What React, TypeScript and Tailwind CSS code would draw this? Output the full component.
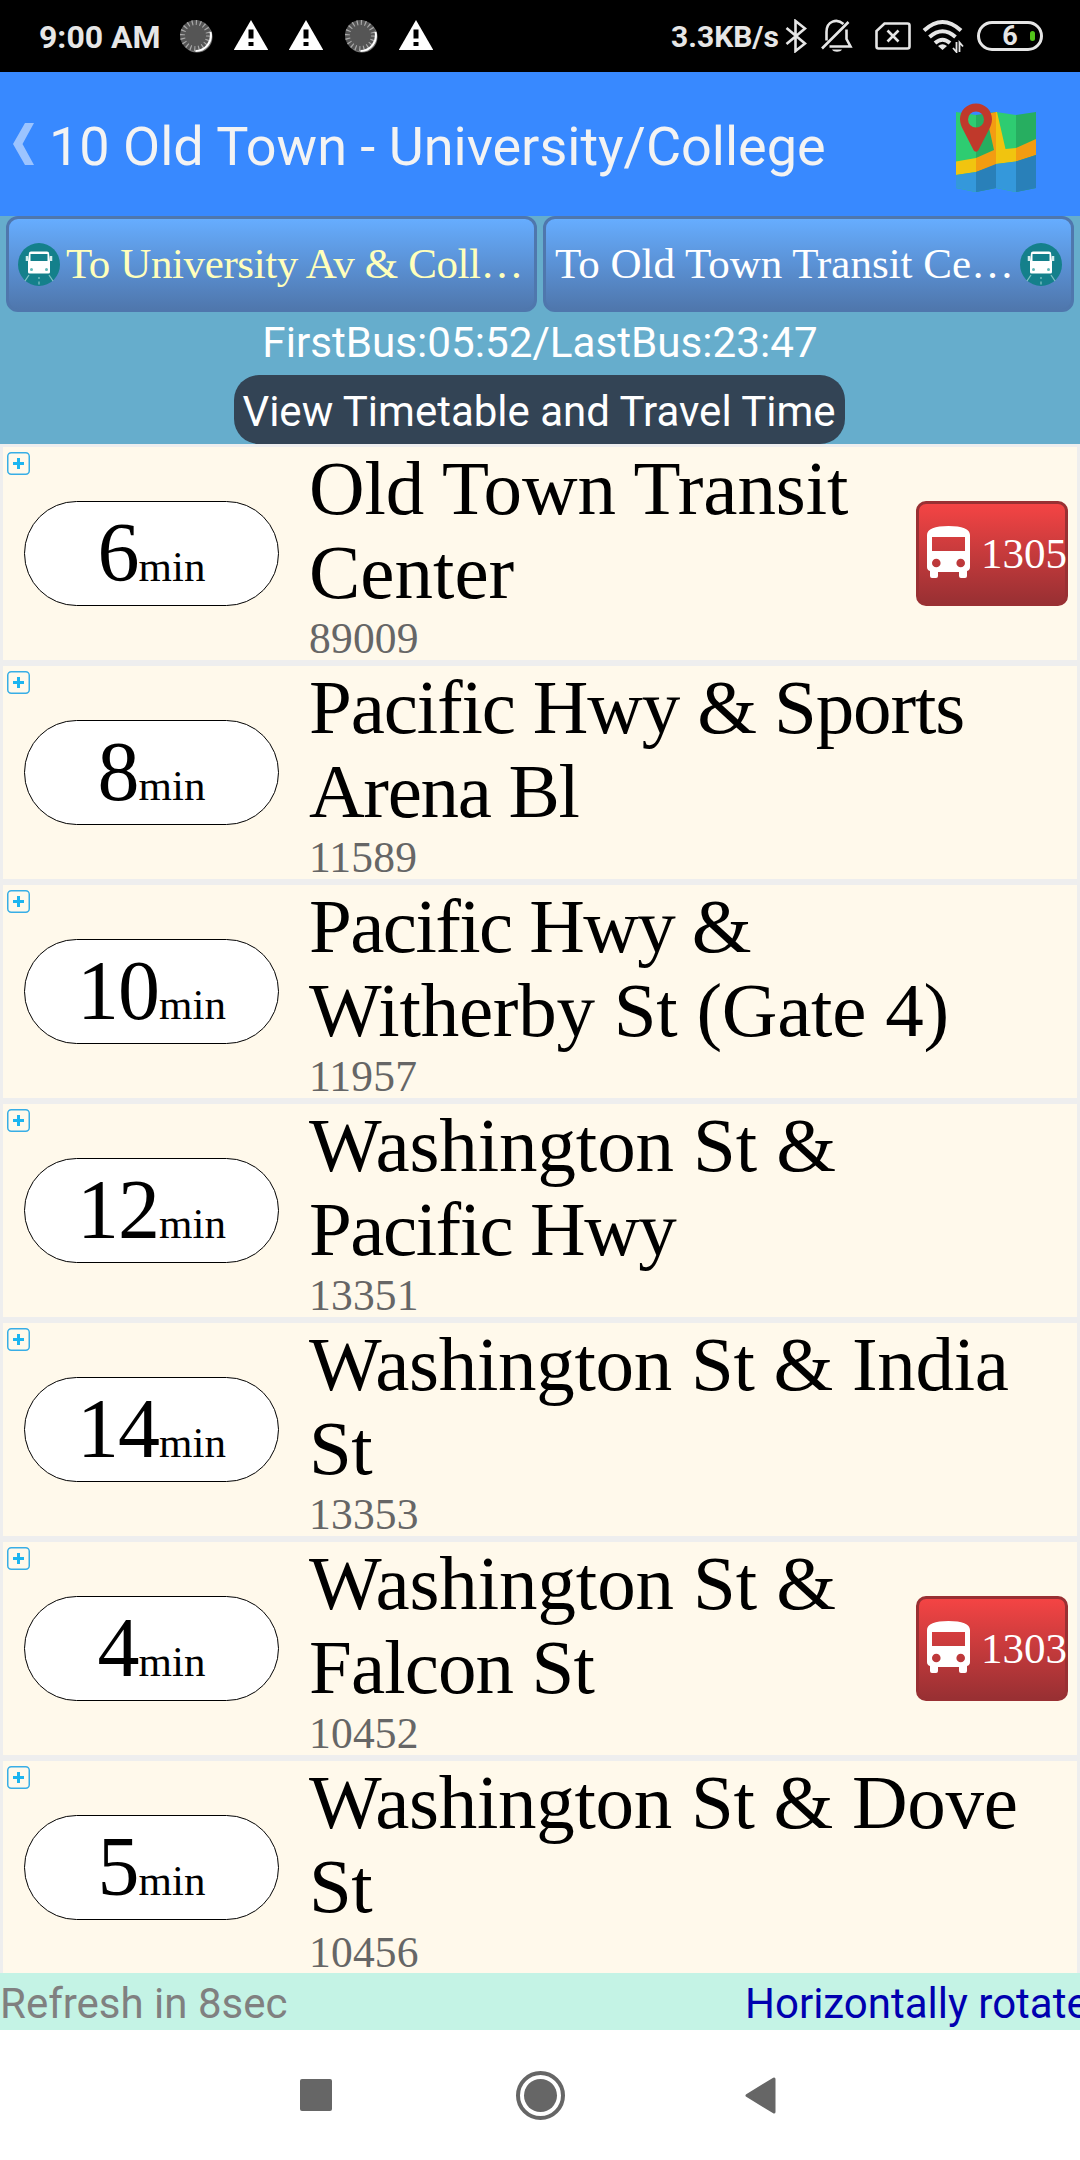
import type { ReactNode } from "react";

type Stop = {
  minutes: string;
  lines: [string, string];
  tracking: [string, string];
  code: string;
  vehicle?: string;
};

const STOPS: Stop[] = [
  { minutes: "6", lines: ["Old Town Transit", "Center"], tracking: ["tracking-[-0.1px]", "tracking-normal"], code: "89009", vehicle: "1305" },
  { minutes: "8", lines: ["Pacific Hwy & Sports", "Arena Bl"], tracking: ["tracking-[-1.15px]", "tracking-[-1.3px]"], code: "11589" },
  { minutes: "10", lines: ["Pacific Hwy &", "Witherby St (Gate 4)"], tracking: ["tracking-[-1.6px]", "tracking-[-0.25px]"], code: "11957" },
  { minutes: "12", lines: ["Washington St &", "Pacific Hwy"], tracking: ["tracking-[-0.1px]", "tracking-[-1.5px]"], code: "13351" },
  { minutes: "14", lines: ["Washington St & India", "St"], tracking: ["tracking-[-0.3px]", "tracking-[-0.5px]"], code: "13353" },
  { minutes: "4", lines: ["Washington St &", "Falcon St"], tracking: ["tracking-[-0.1px]", "tracking-[-0.9px]"], code: "10452", vehicle: "1303" },
  { minutes: "5", lines: ["Washington St & Dove", "St"], tracking: ["tracking-[-0.3px]", "tracking-[-0.5px]"], code: "10456" },
];

function Spinner() {
  return (
    <svg className="h-[34px] w-[34px] shrink-0" viewBox="0 0 34 34" fill="none">
      <circle cx="18" cy="18" r="15.5" fill="#777" />
      <circle cx="16.5" cy="16.5" r="15.5" fill="#555" />
      <circle cx="16.5" cy="16.5" r="13" stroke="#aaa" strokeWidth="5" strokeDasharray="1.2 2.88" />
      <path d="M31.5 13a15.5 15.5 0 0 1-15 19" stroke="#fff" strokeWidth="2" />
    </svg>
  );
}

function Warning() {
  return (
    <svg className="h-[31px] w-[34px] shrink-0" viewBox="0 0 34 31">
      <path d="M17 0 34 29.5V30H0v-.5Z" fill="#fff" />
      <path d="M14.5 9.5h5v9h-5zM14.5 22h5v4h-5z" fill="#000" />
    </svg>
  );
}

function StatusBar() {
  return (
    <div className="flex h-[72px] shrink-0 items-center bg-black pl-[39px] pr-[37px] text-[#e6e6e6]">
      <span className="w-[140px] pt-[2px] text-[32px] font-bold leading-none">9:00 AM</span>
      <div className="flex items-center gap-[21px] pb-[1px]">
        <Spinner />
        <Warning />
        <Warning />
        <Spinner />
        <Warning />
      </div>
      <div className="flex-1" />
      <span className="w-[114px] whitespace-nowrap pt-[2px] text-[30px] font-bold leading-none">3.3KB/s</span>
      <svg className="h-[34px] w-[22px] shrink-0" viewBox="0 0 22 34" fill="none" stroke="#e6e6e6" strokeWidth="2.6">
        <path d="M1.5 9 20 24.5 10.5 32V2L20 9.5 1.5 25" />
      </svg>
      <svg className="ml-[14px] h-[34px] w-[32px] shrink-0" viewBox="0 0 32 34" fill="none" stroke="#e6e6e6" strokeWidth="2.6">
        <path d="M1 29.5 27.5 3M5.5 21.5V13C5.5 2 16-1 22.5 5M25.5 10.5V20L29.5 27.5H8.5" />
        <path d="M11 30.5h10c-1.5 3-8.5 3-10 0Z" fill="#e6e6e6" stroke="none" />
      </svg>
      <svg className="ml-[21px] h-[30px] w-[38px] shrink-0" viewBox="0 0 38 30" fill="none" stroke="#e6e6e6" strokeWidth="2.6">
        <path d="M10.5 2.5H33.5a2 2 0 0 1 2 2V25.5a2 2 0 0 1-2 2H4.5a2 2 0 0 1-2-2V10Z" />
        <path d="m13.5 9.5 11 11m0-11-11 11" />
      </svg>
      <svg className="ml-[10px] h-[34px] w-[42px] shrink-0" viewBox="0 0 42 34" fill="none" stroke="#e6e6e6" strokeWidth="4">
        <path d="M2 11.5Q20.5-5.5 39 11.5M7.5 18Q20.5 6.5 33.5 18M13 24Q20.5 17.5 28 24" />
        <path d="M16 27q4.5-3.5 9 0l-4.5 4Z" fill="#e6e6e6" stroke="none" />
        <path d="M34.5 23v10l-3.5-4M37.5 33V23.5l3.5 4" strokeWidth="1.8" />
      </svg>
      <div className="relative ml-[13px] flex h-[30px] w-[66px] shrink-0 items-center justify-center rounded-full border-[3px] border-[#e6e6e6] text-[27px] font-bold leading-none">
        6
        <span className="absolute right-[5px] h-[10px] w-[5px] rounded-full bg-[#52c41a]" />
      </div>
    </div>
  );
}

function MapIcon() {
  return (
    <svg className="h-[90px] w-[80px]" viewBox="0 0 80 90">
      <path d="M0 9 20 12V89L0 85Z" fill="#2ecc71" />
      <path d="M20 12 40 9V85L20 89Z" fill="#27ae60" />
      <path d="M40 9 60 12V89L40 85Z" fill="#2ecc71" />
      <path d="M60 12 80 9V85L60 89Z" fill="#27ae60" />
      <path d="M0 58.5 20 55V69L0 72Z" fill="#f1c40f" />
      <path d="m20 55 18-8L30 11l10-2V62L20 69Z" fill="#f39c12" />
      <path d="M40 9h1l8.5 37L60 45V58.5L40 61Z" fill="#f1c40f" />
      <path d="M60 45 80 36V52L60 58.5Z" fill="#f39c12" />
      <path d="M0 72 20 69V89L0 85Z" fill="#3498db" />
      <path d="M20 69 40 61V85L20 89Z" fill="#2980b9" />
      <path d="M40 61 60 58.5V89L40 85Z" fill="#3498db" />
      <path d="M60 58.5 80 52V85L60 89Z" fill="#2980b9" />
      <path
        d="M20 .5C11 .5 4 7.5 4 16c0 4 1.5 7.5 3 10.5L17 46c1.5 3.5 4.5 3.5 6 0L33 26.5c1.5-3 3-6.5 3-10.5C36 7.5 29 .5 20 .5Zm0 8a8 8 0 1 1 0 16 8 8 0 0 1 0-16Z"
        fill="#c0392b"
        fillRule="evenodd"
      />
    </svg>
  );
}

function Header() {
  return (
    <div className="flex h-36 shrink-0 items-center bg-[#3889ff] pl-[13px] pr-11">
      <svg className="h-[42px] w-[21px] shrink-0" viewBox="0 0 21 42">
        <path d="M12 0h9L9.5 21 21 42h-9L0 21Z" fill="#9cc4ff" />
      </svg>
      <h1 className="flex-1 whitespace-nowrap pl-[15px] pt-[5px] text-[54px] leading-none text-[#f3f3f3]">
        10 Old Town - University/College
      </h1>
      <div className="pt-[7px]">
        <MapIcon />
      </div>
    </div>
  );
}

function TransitBadge() {
  return (
    <svg className="h-[43px] w-[42px] shrink-0" viewBox="0 0 42 43" fill="none">
      <ellipse cx="21" cy="21.5" rx="21" ry="21.5" fill="#14808b" />
      <path d="M11 10q0-1.5 2-1.5h16q2 0 2 1.5l1 8v11q0 1.5-1.5 1.5H11.5Q10 30.5 10 29V18Z" fill="#fff" />
      <path d="M12.5 11h17v7h-17z" fill="#14808b" />
      <path d="M9 13v5M33 13v5" stroke="#d5eeee" strokeWidth="2.5" />
      <path d="m11 32-4 6M31 32l4 6M21 34v2m0 2.5v3" stroke="#9bd2d2" strokeWidth="1.3" strokeOpacity="0.8" />
      <circle cx="13.5" cy="26.5" r="1.5" fill="#60b8b8" />
      <circle cx="28.5" cy="26.5" r="1.5" fill="#60b8b8" />
    </svg>
  );
}

function DirectionButton({ children, className }: { children: ReactNode; className: string }) {
  return (
    <button
      className={`flex h-24 w-[531px] shrink-0 items-center rounded-xl border-[3px] border-[#4f77ad] bg-linear-to-b from-[#66adff] to-[#4f77ad] pl-[9px] text-left font-['Liberation_Serif',serif] text-[43px] leading-none whitespace-nowrap ${className}`}
    >
      {children}
    </button>
  );
}

function RoutePanel() {
  return (
    <div className="flex h-[228px] shrink-0 flex-col items-center bg-[#66adcc] text-[42.2px] leading-[48px] text-white">
      <div className="flex w-full gap-1.5 px-1.5">
        <DirectionButton className="text-[#ffffbb]">
          <TransitBadge />
          <span className="pb-[1px] pl-[6px] tracking-[-0.4px]">To University Av &amp; Coll…</span>
        </DirectionButton>
        <DirectionButton className="text-white">
          <span className="w-[465px] pb-[1px]">To Old Town Transit Ce…</span>
          <TransitBadge />
        </DirectionButton>
      </div>
      <p className="mt-[7px]">FirstBus:05:52/LastBus:23:47</p>
      <button className="mt-[8px] mr-[2px] h-[69px] w-[611px] whitespace-nowrap rounded-[25px] bg-[#334455] pt-[5px] text-[42px]">
        View Timetable and Travel Time
      </button>
    </div>
  );
}

function ExpandIcon() {
  return (
    <svg className="absolute left-1 top-[5px] h-[23px] w-[23px]" viewBox="0 0 23 23" fill="none">
      <rect x="0.75" y="0.75" width="21.5" height="21.5" rx="3.5" stroke="#38aee6" strokeWidth="1.5" />
      <path d="M11.5 6v11M6 11.5h11" stroke="#1cb5f0" strokeWidth="3" />
    </svg>
  );
}

function VehicleBadge({ id }: { id: string }) {
  return (
    <div className="flex h-[105px] w-[152px] shrink-0 items-center rounded-[10px] border-[3px] border-[#993033] bg-linear-to-b from-[#f44444] to-[#993033] pl-[8px] text-[43px] leading-none text-white">
      <svg className="mb-[3px] h-[52px] w-[43px] shrink-0" viewBox="0 0 43 52">
        <path
          d="M5 11h33v14H5zM0 9C0 3 8 0 21.5 0S43 3 43 9v32q0 3-3 4v5q0 2-2 2h-4q-2 0-2-2v-4H11v4q0 2-2 2H5q-2 0-2-2v-5q-3-1-3-4Zm5 28a4.3 4.3 0 1 0 8.6 0A4.3 4.3 0 1 0 5 37Zm24.4 0a4.3 4.3 0 1 0 8.6 0 4.3 4.3 0 1 0-8.6 0Z"
          fill="#fff"
          fillRule="evenodd"
        />
      </svg>
      <span className="pl-[11px]">{id}</span>
    </div>
  );
}

function StopRow({ stop }: { stop: Stop }) {
  return (
    <li className="relative flex h-[219px] shrink-0 items-center border-[3px] border-[#eee] bg-[#fff9eb] pl-[21px] pr-[9px] font-['Liberation_Serif',serif] text-black">
      <ExpandIcon />
      <div className="flex h-[105px] w-[255px] shrink-0 items-baseline justify-center rounded-full border border-black bg-white leading-[102px]">
        <span className="text-[84px] tracking-[-1px]">{stop.minutes}</span>
        <span className="text-[43px]">min</span>
      </div>
      <div className="flex-1 self-start whitespace-nowrap pl-[30px]">
        <div className="-mt-[1px] text-[77px] leading-[84px]">
          {stop.lines.map((line, i) => (
            <div key={line} className={stop.tracking[i]}>{line}</div>
          ))}
        </div>
        <div className="pt-[2px] text-[43.5px] leading-[44px] tracking-[0.2px] text-[#666]">{stop.code}</div>
      </div>
      {stop.vehicle && <VehicleBadge id={stop.vehicle} />}
    </li>
  );
}

function NavBar() {
  return (
    <div className="flex h-[130px] shrink-0 items-center bg-white pl-[300px]">
      <div className="h-8 w-8 rounded-[2px] bg-[#666]" />
      <div className="ml-[184px] flex h-[49px] w-[49px] items-center justify-center rounded-full border-4 border-[#666]">
        <div className="h-[33px] w-[33px] rounded-full bg-[#666]" />
      </div>
      <svg className="ml-[180px] h-[37px] w-[31px]" viewBox="0 0 31 37">
        <path d="M2 18.5 29 2v33Z" fill="#666" stroke="#666" strokeWidth="3" strokeLinejoin="round" />
      </svg>
    </div>
  );
}

export default function App() {
  return (
    <div className="flex h-[2160px] w-[1080px] flex-col overflow-hidden font-['Roboto',sans-serif]">
      <StatusBar />
      <Header />
      <RoutePanel />
      <ul className="flex h-[1529px] shrink-0 flex-col overflow-hidden">
        {STOPS.map((stop) => (
          <StopRow key={stop.code} stop={stop} />
        ))}
      </ul>
      <div className="flex h-[57px] shrink-0 overflow-hidden whitespace-nowrap bg-[#c4f3e5] text-[42px] leading-[61px]">
        <span className="w-[745px] shrink-0 text-[#808080]">Refresh in 8sec</span>
        <span className="text-[#0000b0]">Horizontally rotate</span>
      </div>
      <NavBar />
    </div>
  );
}
